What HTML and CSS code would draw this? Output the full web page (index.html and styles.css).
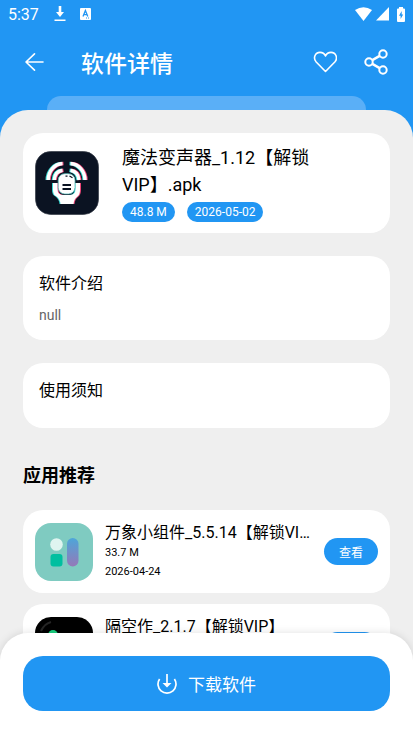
FILE: index.html
```html
<!DOCTYPE html>
<html lang="zh-CN">
<head>
<meta charset="utf-8">
<meta name="viewport" content="width=device-width, initial-scale=1">
<title>软件详情</title>
<link rel="stylesheet" href="styles.css">
</head>
<body>
<header class="top">
  <div class="status">
    <span class="clock">5:37</span>
    <svg class="status-dl" width="12" height="16" viewBox="0 0 12 16" fill="#fff"><path d="M4.7 0h2.6v6H10L6 11 2 6h2.7zM.5 13.4h11V15H.5z"/></svg>
    <svg width="11" height="12" viewBox="0 0 11 12"><rect width="11" height="12" rx="1" fill="#fff"/><path d="M3 8.5 5.4 2.6 7.8 8.5M3.8 6.6H7" fill="none" stroke="#2196f3" stroke-width="1.3"/><path d="M6 10h1M8 10h1" stroke="#2196f3"/></svg>
    <div class="signals">
      <svg width="17" height="14" viewBox="0 0 17 14" fill="#fff"><path d="M0 3Q8.500-2.600 17 3L8.500 14z"/></svg>
      <svg width="13" height="14" viewBox="0 0 13 14" fill="#fff"><path d="M13 0v13.500H0z"/></svg>
      <svg class="battery" width="8" height="15" viewBox="0 0 8 15"><path d="M2 0h4v1.500h1q1 0 1 1V14q0 1-1 1H1q-1 0-1-1V2.500q0-1 1-1h1z" fill="#fff"/><path d="M4.700 4 2 8.800h1.600V12L6.200 7.400H4.700z" fill="#2196f3"/></svg>
    </div>
  </div>
  <div class="appbar">
    <button class="icon-btn" type="button" aria-label="返回"><svg width="20" height="20" viewBox="0 0 20 20" fill="none" stroke="#fff" stroke-width="1.600" stroke-linecap="round" stroke-linejoin="round"><path d="M18 10H1M9.500 1.800 1 10l8.500 8.200"/></svg></button>
    <h1>软件详情</h1>
    <button class="icon-btn" type="button" aria-label="收藏"><svg width="24" height="22" viewBox="0 0 24 22" fill="none" stroke="#fff" stroke-width="1.600" stroke-linejoin="round"><path d="M12.500 20.500 3.200 11C-.2 7.200 2 1.400 7 1.400c2.600 0 4.500 1.300 5.500 3.500 1-2.200 2.900-3.500 5.500-3.500 5 0 7.200 5.800 3.800 9.600z"/></svg></button>
    <button class="icon-btn" type="button" aria-label="分享"><svg width="24" height="26" viewBox="0 0 24 26" fill="none" stroke="#fff" stroke-width="2"><circle cx="5" cy="13" r="3.700"/><circle cx="19" cy="5" r="3.700"/><circle cx="19" cy="21" r="3.700"/><path stroke-width="2.400" d="m8.300 11.100 7.400-4.200M8.300 14.900l7.400 4.200"/></svg></button>
  </div>
  <div class="back-sheet"></div>
</header>

<main class="sheet">
  <section class="card app">
    <svg class="app-icon" viewBox="0 0 64 64" role="img" aria-label="魔法变声器">
      <rect x=".5" y=".5" width="63" height="63" rx="15" fill="#0b1322" stroke="#333b46" stroke-width=".7"/>
      <defs>
        <g id="mic">
          <g fill="none" stroke="currentColor" stroke-width="3.400">
            <path d="M13.200 29C13.200 20 19.500 13 27.500 12.500M19.200 29C19.500 23.500 22.500 20 27.500 19.200"/>
            <path d="M35.500 12.500C43.500 13 50 20 50 29M35.500 19.200C40.500 20 43.500 23.500 44 29"/>
          </g>
          <path fill="currentColor" d="M18 32h4.500v6q0 6 6 6h6q6 0 6-6v-6H45v7q0 5-3 7-3 2-3.500 7h-13q-.5-5-4-7.500Q18 44 18 39z"/>
        </g>
      </defs>
      <use href="#mic" class="glow-cyan" x="-1"/>
      <use href="#mic" class="glow-pink" x="1"/>
      <use href="#mic" class="glow-white"/>
      <rect x="23.200" y="22.700" width="16.800" height="20.300" rx="6.500" fill="#fff" stroke="#57b9b8" stroke-width=".8"/>
      <path d="M27.500 34h8.500M27.500 38h8.500" stroke="#0b1322" stroke-width="1.800"/>
      <path d="M30.500 25.200h2M34.500 25l3 1.800" stroke="#0b1322" stroke-width="1.300"/>
    </svg>
    <div class="app-info">
      <h2>魔法变声器_1.12【解锁VIP】.apk</h2>
      <div class="tags"><span class="tag">48.8 M</span><span class="tag">2026-05-02</span></div>
    </div>
  </section>

  <section class="card text-card">
    <h3>软件介绍</h3>
    <p>null</p>
  </section>

  <section class="card text-card">
    <h3>使用须知</h3>
  </section>

  <h2 class="list-title">应用推荐</h2>
  <ul class="list">
    <li class="item">
      <svg class="item-icon" viewBox="0 0 58 58">
        <defs><linearGradient id="bar" x1="0" y1="0" x2="0" y2="1"><stop stop-color="#4da6d9"/><stop offset="1" stop-color="#9579b8"/></linearGradient></defs>
        <rect width="58" height="58" rx="16" fill="#7fcbc1"/>
        <circle cx="21.500" cy="21.500" r="6.300" fill="#dff4f0"/>
        <rect x="15.500" y="31" width="12" height="12.500" rx="3" fill="#00bfa0"/>
        <rect x="32" y="15" width="11.500" height="28.500" rx="5.750" fill="url(#bar)"/>
      </svg>
      <div class="item-info">
        <h3>万象小组件_5.5.14【解锁VIP】</h3>
        <p>33.7 M</p>
        <p>2026-04-24</p>
      </div>
      <button class="view" type="button">查看</button>
    </li>
    <li class="item">
      <svg class="item-icon" viewBox="0 0 58 58">
        <rect width="58" height="58" rx="16" fill="#000"/>
        <path d="M6 14Q9 7 16 5" fill="none" stroke="#252525" stroke-width="2"/>
        <circle cx="18" cy="18" r="5" fill="#19cf7f"/>
      </svg>
      <div class="item-info">
        <h3>隔空作_2.1.7【解锁VIP】</h3>
      </div>
      <button class="view" type="button">查看</button>
    </li>
  </ul>
</main>

<footer class="bottom">
  <button class="download" type="button">
    <svg width="20" height="20" viewBox="0 0 20 20" fill="none" stroke="#fff" stroke-width="1.700"><path d="M2.600 5A9 9 0 1 0 17.400 5"/><path d="M10 0v10"/><path d="M5.500 9h9L10 13.500z" fill="#fff" stroke="none"/></svg>
    <span>下载软件</span>
  </button>
</footer>
</body>
</html>
```
FILE: styles.css
```css
:root {
  --blue: #2196f3;
  --gap: 23px;
}

* {
  box-sizing: border-box;
  margin: 0;
  padding: 0;
}

body {
  height: 100vh;
  display: flex;
  flex-direction: column;
  background: var(--blue);
  color: #000;
  font-family: Roboto, "Noto Sans CJK SC", sans-serif;
  overflow: hidden;
}

svg {
  display: block;
  flex: none;
}

button {
  border: 0;
  background: none;
  color: #fff;
  font-family: inherit;
  cursor: pointer;
}

h2, h3 {
  font-weight: 400;
}

.top {
  flex: none;
  color: #fff;
}

.status {
  height: 28px;
  display: flex;
  align-items: center;
  padding: 0 8px;
}

.clock {
  font-size: 16px;
}

.status-dl {
  margin: 0 14px 0 15px;
}

.signals {
  display: flex;
  align-items: center;
  gap: 4px;
  margin-left: auto;
}

.battery {
  margin-left: 4px;
}

.appbar {
  height: 68px;
  display: flex;
  align-items: center;
  gap: 27px;
  padding: 0 25px;
}

.appbar h1 {
  flex: 1;
  padding-left: 9px;
  font-size: 23px;
  font-weight: 500;
}

.back-sheet {
  height: 14px;
  margin: 0 47px;
  border-radius: 20px 20px 0 0;
  background: #5aaff7;
}

.sheet {
  flex: 1;
  min-height: 0;
  display: flex;
  flex-direction: column;
  gap: var(--gap);
  padding: var(--gap) var(--gap) 0;
  border-radius: 28px 28px 0 0;
  background: #efefef;
  overflow-y: auto;
  scrollbar-width: none;
}

.card, .item {
  flex: none;
  border-radius: 20px;
  background: #fff;
}

.app {
  display: flex;
  align-items: center;
  gap: 23px;
  padding: 11px 12px;
}

.app-icon {
  width: 64px;
  height: 64px;
}

.glow-cyan { color: #36d9d4; }
.glow-pink { color: #ee4778; }
.glow-white { color: #fff; }

.app-info h2 {
  max-width: 200px;
  font-size: 18px;
  line-height: 27px;
}

.tags {
  display: flex;
  gap: 12px;
  padding-top: 4px;
}

.tag {
  padding: 0 8px;
  border-radius: 10px;
  background: var(--blue);
  color: #fff;
  font-size: 12px;
  line-height: 20px;
}

.text-card {
  padding: 16px 16px 25px;
}

.text-card h3 {
  font-size: 16px;
  line-height: 24px;
}

.text-card p {
  padding-top: 9px;
  margin-bottom: -10px;
  color: #666;
  font-size: 14px;
  line-height: 20px;
}

.list-title {
  flex: none;
  padding-top: 14px;
  font-size: 18px;
  font-weight: 700;
  line-height: 22px;
}

.list {
  display: flex;
  flex-direction: column;
  gap: 11px;
  list-style: none;
}

.item {
  height: 83px;
  display: flex;
  align-items: center;
  gap: 12px;
  padding: 0 12px;
}

.item-icon {
  width: 58px;
  height: 58px;
}

.item-info {
  flex: 1;
  min-width: 0;
  align-self: flex-start;
  padding-top: 12px;
}

.item-info h3 {
  overflow: hidden;
  font-size: 16px;
  line-height: 21px;
  text-overflow: ellipsis;
  white-space: nowrap;
}

.item-info p {
  font-size: 11px;
  line-height: 19px;
}

.view {
  flex: none;
  height: 27px;
  padding: 0 15px;
  border-radius: 14px;
  background: var(--blue);
  font-size: 12px;
}

.bottom {
  z-index: 1;
  flex: none;
  margin-top: -28px;
  padding: var(--gap);
  border-radius: 28px 28px 0 0;
  background: #fff;
  box-shadow: 0 0 8px rgba(0, 0, 0, 0.12);
}

.download {
  width: 100%;
  height: 55px;
  display: flex;
  align-items: center;
  justify-content: center;
  gap: 11px;
  border-radius: 20px;
  background: var(--blue);
  font-size: 17px;
}
```
